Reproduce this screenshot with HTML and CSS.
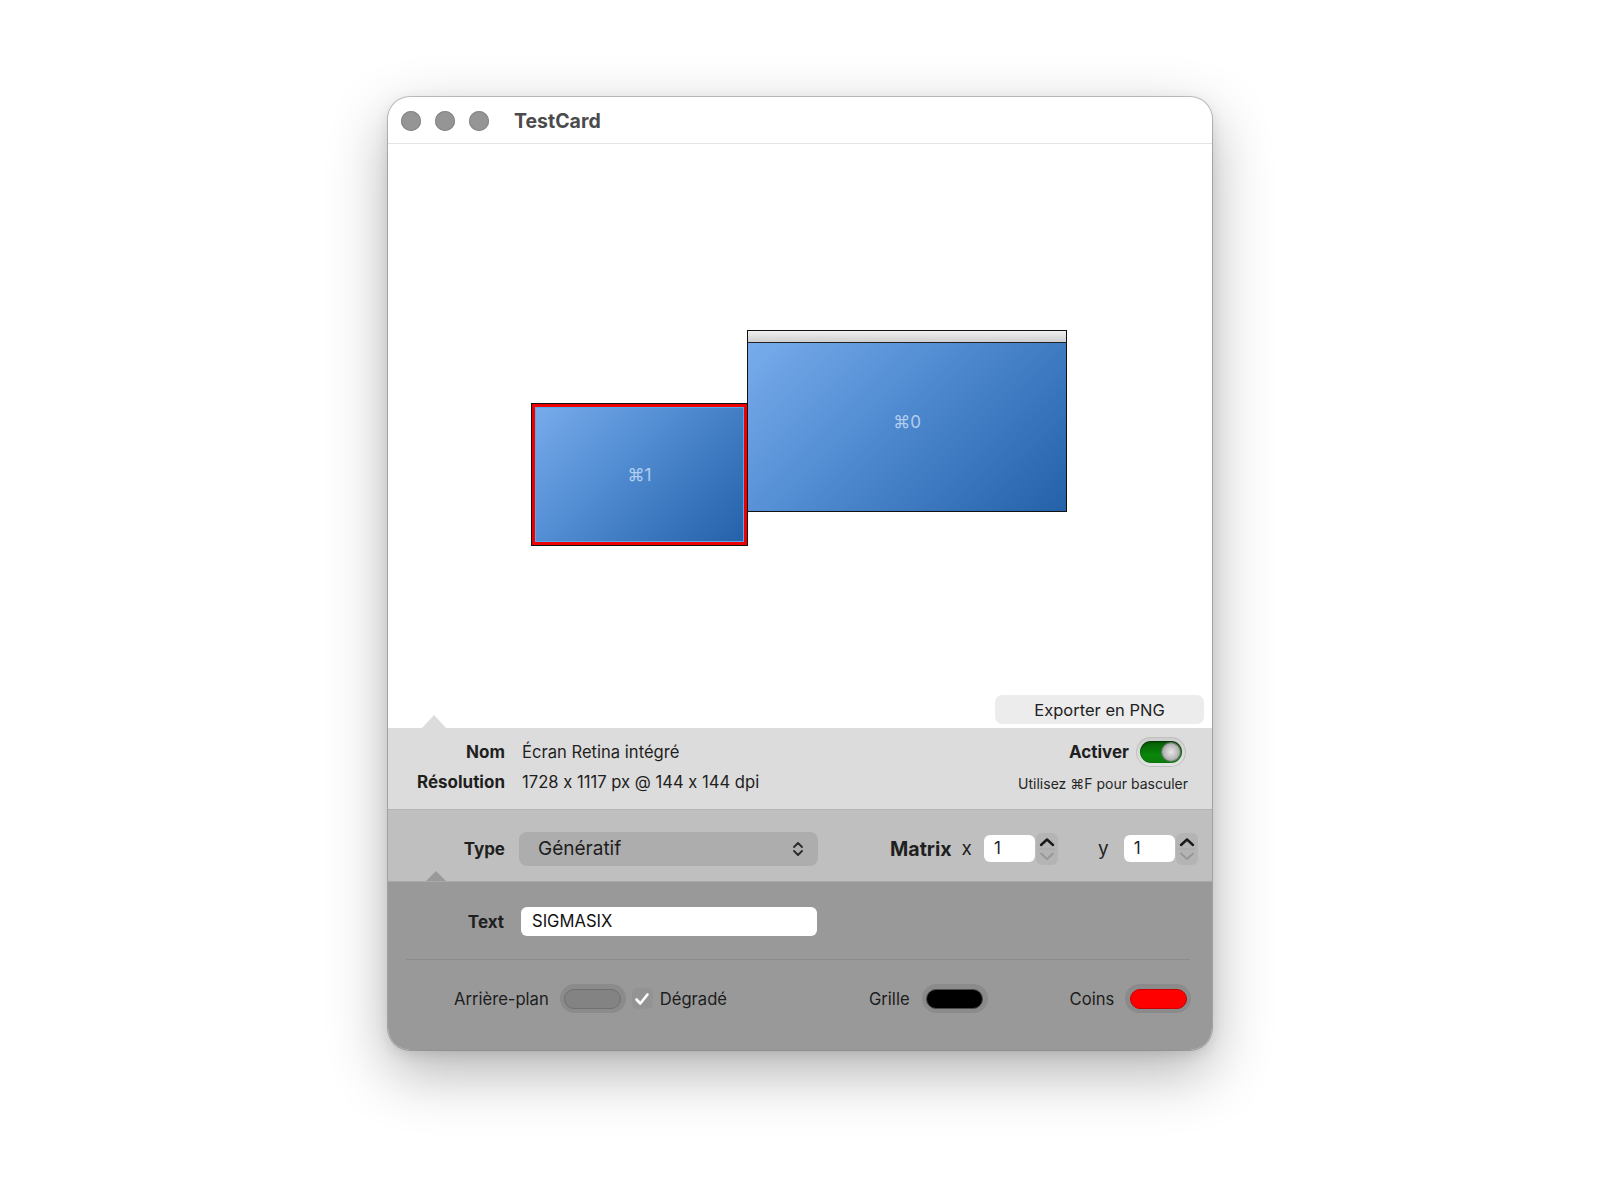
FILE: index.html
```html
<!DOCTYPE html>
<html lang="fr">
<head>
<meta charset="utf-8">
<title>TestCard</title>
<link rel="stylesheet" href="styles.css">
</head>
<body>
<div class="stage">
  <div class="window">
    <div class="titlebar">
      <div class="lights"><span class="light"></span><span class="light"></span><span class="light"></span></div>
      <div class="title">TestCard</div>
    </div>
    <div class="canvas">
      <div class="monitor monitor-main" style="left:359px;top:186px;width:320px;height:182px;">
        <div class="menubar"></div>
        <div class="screen"><span class="label">⌘0</span></div>
      </div>
      <div class="monitor monitor-sel" style="left:143px;top:259px;width:217px;height:143px;">
        <div class="screen"><span class="label">⌘1</span></div>
      </div>
      <button class="export">Exporter en PNG</button>
    </div>
    <div class="info">
      <div class="info-grid">
        <div class="k">Nom</div><div class="v">Écran Retina intégré</div>
        <div class="k">Résolution</div><div class="v">1728 x 1117 px @ 144 x 144 dpi</div>
      </div>
      <div class="info-right">
        <div class="activer"><span class="k">Activer</span>
          <span class="toggle"><span class="track"><span class="knob"></span></span></span>
        </div>
        <div class="hint">Utilisez ⌘F pour basculer</div>
      </div>
    </div>
    <div class="typebar">
      <div class="k type-label">Type</div>
      <div class="popup"><span>Génératif</span>
        <svg class="updown" width="12" height="18" viewBox="0 0 12 18"><path d="M2 7 L6 3 L10 7" fill="none" stroke="#2a2a2a" stroke-width="1.8" stroke-linecap="round" stroke-linejoin="round"/><path d="M2 11 L6 15 L10 11" fill="none" stroke="#2a2a2a" stroke-width="1.8" stroke-linecap="round" stroke-linejoin="round"/></svg>
      </div>
      <div class="matrix"><span class="mlabel">Matrix</span><span class="axis">x</span>
        <span class="num">1</span>
        <span class="stepper"><svg width="22" height="32" viewBox="0 0 22 32"><path d="M5 12 L11 6.5 L17 12" fill="none" stroke="#1a1a1a" stroke-width="2.4" stroke-linecap="round" stroke-linejoin="round"/><line x1="3" y1="16" x2="19" y2="16" stroke="#a6a6a6" stroke-width="1"/><path d="M5 20.5 L11 26 L17 20.5" fill="none" stroke="#979797" stroke-width="1.8" stroke-linecap="round" stroke-linejoin="round"/></svg></span>
        <span class="axis axis-y">y</span>
        <span class="num">1</span>
        <span class="stepper"><svg width="22" height="32" viewBox="0 0 22 32"><path d="M5 12 L11 6.5 L17 12" fill="none" stroke="#1a1a1a" stroke-width="2.4" stroke-linecap="round" stroke-linejoin="round"/><line x1="3" y1="16" x2="19" y2="16" stroke="#a6a6a6" stroke-width="1"/><path d="M5 20.5 L11 26 L17 20.5" fill="none" stroke="#979797" stroke-width="1.8" stroke-linecap="round" stroke-linejoin="round"/></svg></span>
      </div>
    </div>
    <div class="darkpanel">
      <div class="textrow"><div class="k text-label">Text</div><div class="textfield">SIGMASIX</div></div>
      <div class="sep"></div>
      <div class="wellrow">
        <span class="wl wl-bg">Arrière-plan</span>
        <span class="well"><span class="swatch sw-grey"></span></span>
        <span class="check"><svg width="16" height="14" viewBox="0 0 16 14"><path d="M2.5 7.5 L6.3 11.5 L13.5 2.5" fill="none" stroke="#fff" stroke-width="2.6" stroke-linecap="round" stroke-linejoin="round"/></svg></span>
        <span class="wl">Dégradé</span>
        <span class="wl wl-grid">Grille</span>
        <span class="well"><span class="swatch sw-black"></span></span>
        <span class="wl wl-coins">Coins</span>
        <span class="well"><span class="swatch sw-red"></span></span>
      </div>
    </div>
  </div>
</div>
</body>
</html>
```

FILE: styles.css
```css
html, body { margin: 0; padding: 0; background: #ffffff; }
body { font-family: "Inter", "Noto Sans", "DejaVu Sans", sans-serif; color: #1f1f1f; font-feature-settings: "calt" 0; }
.stage { display: flex; justify-content: center; padding-top: 97px; height: 1103px; }
.window {
  width: 824px; height: 953px; border-radius: 22px; overflow: hidden;
  background: #fff; display: flex; flex-direction: column;
  box-shadow: 0 0 0 1px rgba(0,0,0,0.22), 0 22px 60px rgba(0,0,0,0.30), 0 4px 14px rgba(0,0,0,0.10);
}
.titlebar { height: 47px; flex: none; display: flex; align-items: center; border-bottom: 1px solid #e4e4e4; box-sizing: border-box; padding-top: 1px; }
.lights { display: flex; gap: 14px; margin-left: 13px; }
.light { width: 20px; height: 20px; border-radius: 50%; background: #959595; box-shadow: inset 0 0 0 1px #868686; }
.title { margin-left: 25px; font-weight: 700; font-size: 19.5px; color: #4b4b4b; }

.canvas { position: relative; height: 584px; flex: none; display: flex; justify-content: flex-end; align-items: flex-end; padding: 0 8px 4px 0; box-sizing: border-box; }
.monitor { position: absolute; box-sizing: border-box; border: 1px solid #111; display: flex; flex-direction: column; }
.menubar { height: 11px; flex: none; background: linear-gradient(#f0f0f0, #cfcfcf); border-bottom: 1px solid #222; }
.screen { flex: 1; display: flex; align-items: center; justify-content: center;
  background: linear-gradient(135deg, #78acec 0%, #4f8ad0 45%, #2461a9 100%); }
.monitor-main .screen { padding-bottom: 10px; }
.monitor-sel .screen { border: 3px solid #ee0000; box-shadow: inset 0 0 0 1px #5aa6ea; }
.label { font-family: "Inter", "DejaVu Sans", sans-serif; font-size: 17px; color: rgba(210,226,248,0.78); }
.export { width: 209px; height: 29px; border: none; border-radius: 7px; background: #ececec; font-family: inherit; font-feature-settings: "calt" 0; font-size: 16.5px; color: #222; padding: 0; }

.k { font-weight: 700; color: #1f1f1f; font-size: 17px; }
.info { position: relative; height: 81px; flex: none; background: #dcdcdc; display: flex; justify-content: space-between; align-items: flex-start; box-sizing: border-box; padding: 14px 24px 0 20px; font-size: 16.6px; }
.info::before { content: ""; position: absolute; left: 34px; top: -13px; border-left: 12px solid transparent; border-right: 12px solid transparent; border-bottom: 13px solid #dcdcdc; }
.info-grid { display: grid; grid-template-columns: 97px auto; column-gap: 17px; row-gap: 9px; line-height: 21px; align-content: start; }
.info-grid .k { text-align: right; }
.info-right { display: flex; flex-direction: column; align-items: flex-end; margin-top: -2px; }
.activer { display: flex; align-items: center; gap: 7px; margin-top: -3px; margin-right: 2px; }
.toggle { width: 50px; height: 30px; border-radius: 15px; background: linear-gradient(#cdcdcd, #e4e4e4); box-shadow: inset 0 0 0 1px #c0c0c0; display: flex; align-items: center; justify-content: center; }
.track { width: 42px; height: 22px; border-radius: 11px; background: linear-gradient(#075d07, #0a860a 65%, #0b7a0b); box-shadow: inset 0 1px 2px rgba(0,0,0,0.5); display: flex; align-items: center; justify-content: flex-end; padding-right: 2px; box-sizing: border-box; }
.knob { width: 18px; height: 18px; border-radius: 50%; background: radial-gradient(circle at 50% 50%, #e6e6e6 0%, #c2c2c2 45%, #9c9c9c 80%, #8a8a8a 100%); box-shadow: 0 0 0 1px #6e6e6e; }
.hint { font-size: 14px; margin-top: 8px; color: #262626; }

.typebar { position: relative; height: 72px; flex: none; background: #bfbfbf; border-top: 1px solid #b4b4b4; box-sizing: border-box; display: flex; align-items: center; padding-top: 6px; }
.type-label { width: 117px; text-align: right; }
.popup { margin-left: 14px; width: 299px; height: 34px; border-radius: 8px; background: #adadad; display: flex; align-items: center; justify-content: space-between; padding: 0 14px 0 19px; box-sizing: border-box; font-size: 19px; color: #1d1d1d; }
.matrix { display: flex; align-items: center; margin-left: 72px; }
.mlabel { font-weight: 700; font-size: 19.6px; }
.axis { font-size: 19px; margin: 0 12px 0 10px; }
.axis-y { margin-left: 40px; margin-right: 15px; }
.num { width: 51px; height: 27px; background: #fff; border-radius: 6px; box-sizing: border-box; padding-left: 10px; font-size: 17px; line-height: 27px; }
.stepper { width: 22px; height: 32px; margin-left: 1px; border-radius: 6px; background: #b4b4b4; display: flex; }

.darkpanel { position: relative; flex: 1; background: #999999; border-top: 1px solid #a9a9a9; padding-top: 25px; box-sizing: border-box; }
.darkpanel::before { content: ""; position: absolute; left: 38px; top: -11px; border-left: 10px solid transparent; border-right: 10px solid transparent; border-bottom: 10px solid #999999; }
.textrow { display: flex; align-items: center; }
.text-label { width: 116px; text-align: right; }
.textfield { margin-left: 17px; width: 296px; height: 29px; background: #fff; border-radius: 6px; box-sizing: border-box; padding-left: 11px; line-height: 29px; font-size: 16.6px; color: #111; }
.sep { height: 1px; background: #8b8b8b; margin: 23px 22px 0 18px; }
.wellrow { display: flex; align-items: center; margin-top: 24px; padding-left: 66px; font-size: 16.6px; }
.wl { color: #1d1d1d; }
.well { width: 66px; height: 29px; border-radius: 15px; background: #8b8b8b; display: flex; align-items: center; justify-content: center; margin-left: 11px; }
.swatch { width: 57px; height: 20px; border-radius: 10px; box-sizing: border-box; }
.sw-grey { background: #838383; border: 1px solid #6f6f6f; }
.sw-black { background: #000; border: 1px solid #4a4a4a; }
.sw-red { background: #ff0000; border: 1px solid #c80000; }
.check { width: 21px; height: 21px; border-radius: 5px; background: #939393; display: flex; align-items: center; justify-content: center; margin: 0 7px 0 6px; }
.wl-grid { margin-left: 142px; }
.wl-grid + .well { margin-left: 12px; }
.wl-coins { margin-left: 82px; }
```
